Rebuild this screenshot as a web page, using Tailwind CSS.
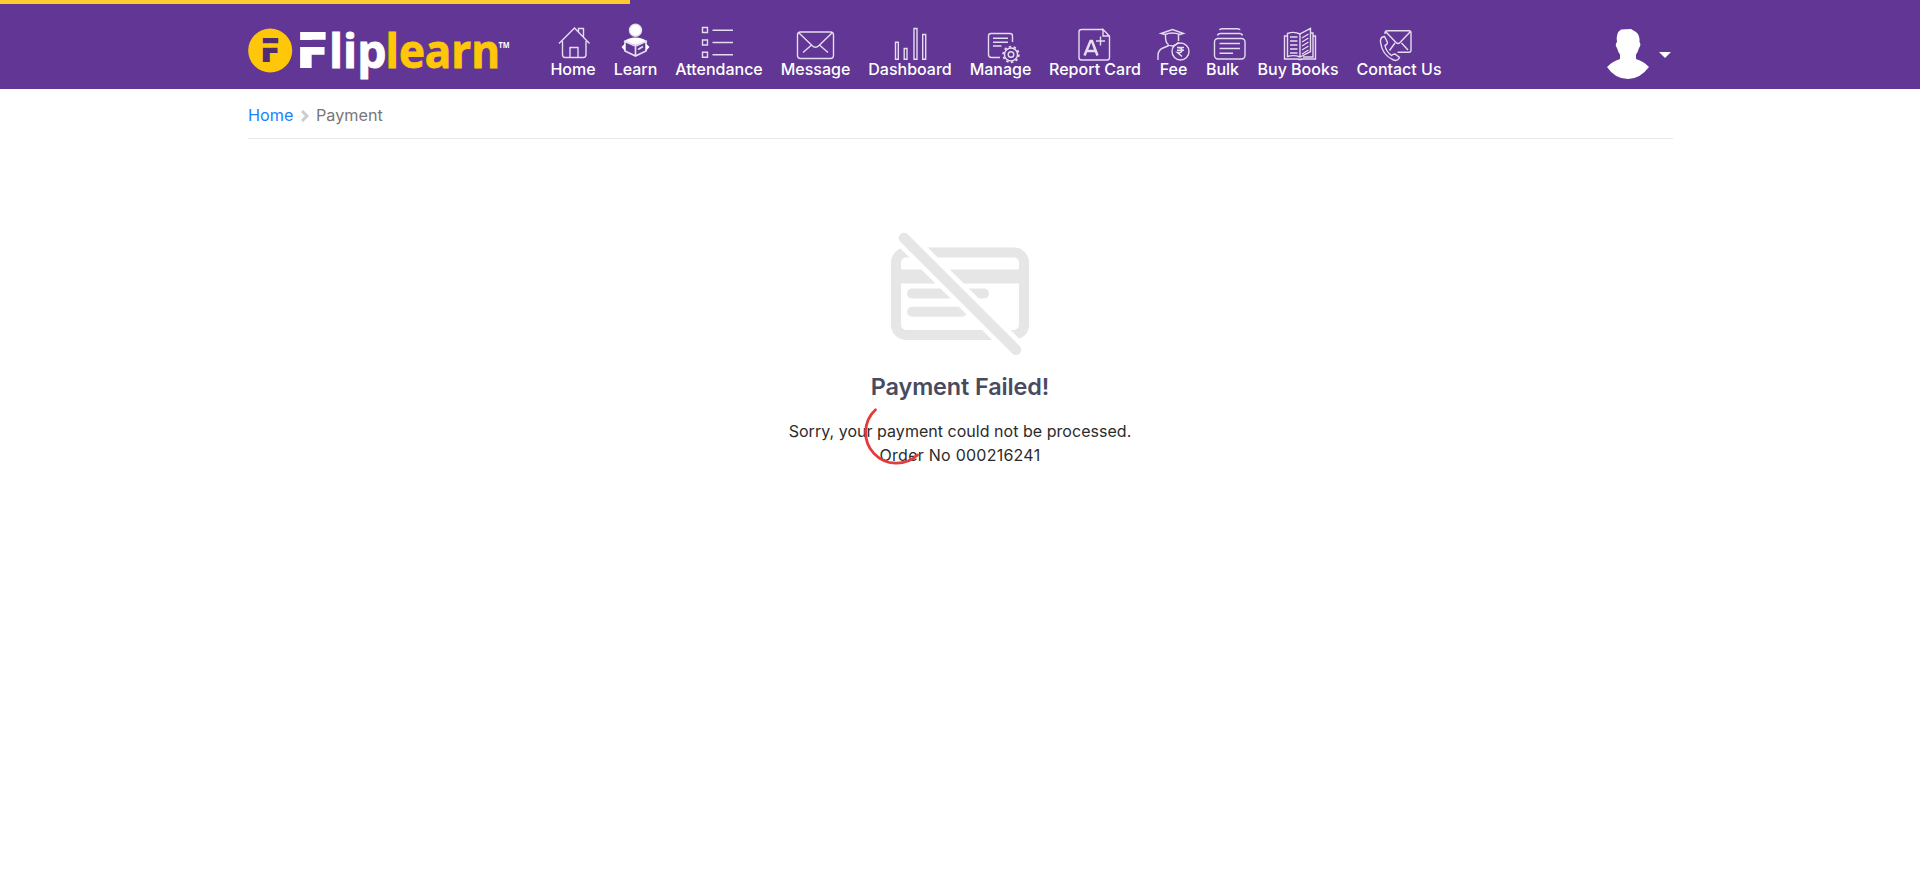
<!DOCTYPE html>
<html lang="en">
<head>
<meta charset="utf-8">
<title>Payment</title>
<script src="https://cdn.jsdelivr.net/npm/@tailwindcss/browser@4"></script>
</head>
<body class="bg-white font-['Inter',sans-serif] overflow-hidden">
<div class="absolute left-0 top-0 h-1 w-[630px] bg-[#ffca2c]"></div>
<header class="h-[89px] bg-[#613694] pl-[248px] flex text-white">
  <svg class="w-[302px] h-[89px] shrink-0" viewBox="248 0 302 89">
    <circle cx="270.2" cy="50.5" r="22" fill="#fec709"/>
    <g font-family="Open Sans" font-weight="800">
      <text x="260" y="62" font-size="33" textLength="19.5" lengthAdjust="spacingAndGlyphs" fill="#4d2d6e">F</text>
      <rect x="261" y="43.2" width="10" height="4.6" fill="#fec709"/>
      <text x="295.500" y="68.200" font-size="50" textLength="32.500" lengthAdjust="spacingAndGlyphs" fill="#fff">F</text>
      <rect x="298" y="40" width="14" height="7" fill="#613694"/>
    </g>
    <g font-family="Open Sans" font-weight="700" font-size="46.500" stroke-width="0.900">
      <text x="329" y="67.700" textLength="57.500" lengthAdjust="spacingAndGlyphs" fill="#fff" stroke="#fff">lip</text>
      <text x="385.500" y="67.700" textLength="114.500" lengthAdjust="spacingAndGlyphs" fill="#fec709" stroke="#fec709">learn</text>
    </g>
    <text x="498.500" y="48" font-family="Open Sans" font-weight="700" font-size="9" textLength="11" lengthAdjust="spacingAndGlyphs" fill="#fff">TM</text>
  </svg>
  <nav class="flex gap-[18px] pt-6 text-[16px] leading-[18px] font-medium whitespace-nowrap [&_a]:flex [&_a]:flex-col [&_a]:items-center [&_svg]:h-9 [&_svg]:w-full [&_svg]:overflow-visible [&_svg]:fill-none [&_svg]:stroke-[#e6dcf0] [&_svg]:stroke-[1.4]">
    <a class="w-[46px]"><svg viewBox="550 24 46 36"><path d="M559 43.500L574.500 28L589.500 43.500M562.500 41V54.500Q562.500 57.500 565 57.500H583.500Q586 57.500 586 54.500V41M570 57.500V47.500H578V57.500M578.500 31.500V28.500H583.500V37"/></svg><span>Home</span></a>
    <a class="w-[43px]"><svg viewBox="614 24 43 36"><circle cx="635.500" cy="30.300" r="6" fill="#fff"/><path fill="#fff" stroke="none" d="M623.500 41.500Q629 37.500 635.500 37.500Q642 37.500 647.500 41.500L635.500 45Z"/><path stroke-width="1.700" d="M625 41.500L635.500 46L646 41.500V51L635.500 56L625 51ZM635.500 46V56M638 49.500L643 46.500"/><path fill="#fff" stroke="none" d="M625 43.500L621.500 47L625 51ZM646 43.500L649.500 47L646 51Z"/></svg><span>Learn</span></a>
    <a class="w-[88px]"><svg viewBox="675 24 88 36"><path d="M702.500 27.500h5v5h-5zM702.500 40h5v5h-5zM702.500 52.300h5v5h-5zM712.500 30.300H733M712.500 42.500H733M712.500 54.800H733"/></svg><span>Attendance</span></a>
    <a class="w-[69px]"><svg viewBox="781 24 69 36"><rect x="797.500" y="32" width="36" height="26.500" rx="3"/><path d="M799 33L812 45.500Q815.500 49 819 45.500L832 33M803 52.500L811 45.500M828 52.500L820 45.500"/></svg><span>Message</span></a>
    <a class="w-[84px]"><svg viewBox="868 24 84 36"><path d="M895.500 42.200h2.800v17h-2.800zM904.200 48.500h2.800v10.700h-2.800zM914 28.500h3v30.700h-3zM922.700 34.500h3v24.700h-3z"/></svg><span>Dashboard</span></a>
    <a class="w-[61px]"><svg viewBox="970 24 61 36"><path d="M1012.500 42V36Q1012.500 33.500 1010 33.500H991Q988.500 33.500 988.500 36V54.500Q988.500 57.500 991.500 57.500H1000M993 38.200H1008M993 42.200H1008M993 46H1001.500"/><circle cx="1011" cy="54.500" r="6.500"/><circle cx="1011" cy="54.500" r="7.800" stroke-width="1.800" stroke-dasharray="2.450 2.450"/><circle cx="1011" cy="54.500" r="2.800"/></svg><span>Manage</span></a>
    <a class="w-[92px]"><svg viewBox="1049 24 92 36"><path d="M1103 29.500H1081.500Q1079 29.500 1079 32V57.500Q1079 60 1081.500 60H1107Q1109.500 60 1109.500 57.500V36L1103 29.500V36H1109.500M1100.500 36.500V45.500M1096 41H1105"/><path stroke-width="2.500" d="M1084.500 55.500L1090.500 41H1092L1097.500 55.500M1086.500 51H1096"/></svg><span>Report Card</span></a>
    <a class="w-[29px]"><svg viewBox="1159 24 29 36"><path d="M1161 33.500L1172.500 29.500L1183.500 33.500L1180 34.500Q1172 31.500 1165 34.500ZM1165.500 35V38Q1166 46 1172.500 46Q1177 45 1178.500 42M1178.500 35V41M1158 60V55.500Q1158 50 1163 48L1168 46V43.500"/><circle cx="1180.500" cy="51.500" r="8.500"/><path stroke-width="1.500" d="M1177 47.500H1184M1177 50.300H1184M1177 47.500Q1182 47.500 1182 50.300T1177.500 52.500L1182 56.500"/></svg><span>Fee</span></a>
    <a class="w-[33px]"><svg viewBox="1206 24 33 36"><path stroke-width="1.500" d="M1219.500 30Q1220 28.800 1222 28.800H1237.500Q1239.500 28.800 1240 30M1217.500 35.500Q1218 33.500 1220.500 33.500H1239.500Q1242 33.500 1242.500 35.500M1219.500 43.500H1240M1219.500 48.500H1240M1219.500 53.300H1233"/><rect x="1214.500" y="38.500" width="30.500" height="20.500" rx="3.500"/></svg><span>Bulk</span></a>
    <a class="w-[82px]"><svg viewBox="1257 24 82 36"><path d="M1300 34Q1294 31 1287.500 33.500V56.500Q1294 54.500 1300 57L1310.500 51.500V28.500L1300 34V57M1287.500 36H1284.500V59H1298Q1300 60 1302 59H1315.500V36H1313V57H1303M1310.500 33H1313V57M1290 37H1297.500M1290 41H1297.500M1290 45H1297.500M1290 49H1297.500M1290 53H1297.500M1302 38L1308.500 34M1302 42L1308.500 38M1302 46L1308.500 42M1302 50L1308.500 46M1302 54L1308.500 50"/></svg><span>Buy Books</span></a>
    <a class="w-[84px]"><svg viewBox="1357 24 84 36"><path d="M1385 34V33Q1385 30.700 1387.500 30.700H1409Q1411 30.700 1411 33V50Q1411 52.300 1409 52.300H1397.500M1386 32L1396 42.500Q1398 44.500 1400 42.500L1410.500 31.500M1389.500 50.500L1395 43M1408 50L1401.500 43M1384.500 36.500Q1380 37 1380.500 42Q1382 55 1393.500 60Q1397.500 61.500 1399.500 57.500L1395 54Q1393 54 1391.500 55.500Q1386 51.500 1385 45.500Q1387.500 44.500 1387.500 42.500Z"/></svg><span>Contact Us</span></a>
  </nav>
  <div class="ml-[165px] pt-[28px] flex">
    <svg class="w-[44px] h-[52px]" viewBox="1606 28 44 52" fill="#fff"><path d="M1621 29.500L1631 29L1636 32Q1640 35 1639.500 42Q1641.500 45 1639 48Q1638 52 1636 54.500V59Q1644 61.500 1649 67Q1640 79 1628 79Q1615 79 1607 67Q1612 61.500 1620 59V54.500Q1618 52 1617 48Q1614.500 45 1617 42Q1615.500 33 1621 29.500Z"/></svg>
    <svg class="ml-[9px] mt-6 w-3 h-[6px]" viewBox="0 0 12 6" fill="#fff"><path d="M0 0H12L6 6Z"/></svg>
  </div>
</header>
<div class="ml-[248px] w-[1425px] h-[50px] border-b border-[#e9e9ea] flex items-start pt-[15px] text-[16.2px] leading-[22px]">
  <a class="text-[#1a82fb] w-[46px]">Home</a>
  <svg class="mx-[7px] mt-[6px] w-2 h-3" viewBox="0 0 8 12" fill="none" stroke="#ccc" stroke-width="3"><path d="M1 1L6 6L1 11"/></svg>
  <span class="text-[#777]">Payment</span>
</div>
<main class="flex flex-col items-center text-[16px] leading-6 text-[#2b2b2b]">
  <svg class="mt-[91px] h-[130px] w-[160px] fill-none stroke-[#e6e6e6]" viewBox="880 230 160 130" stroke-linecap="round">
    <rect x="896" y="252.500" width="128" height="82.500" rx="10" stroke-width="10"/>
    <path stroke="none" fill="#e6e6e6" d="M896 269.500H1024V283.500H896Z"/>
    <path stroke-width="10" d="M912 293.600H984M912 311.700H962"/>
    <path stroke="#fff" stroke-width="20" stroke-linecap="butt" d="M898 232L1022 355.700"/>
    <path stroke-width="10.500" d="M904 238L1016 349.700"/>
  </svg>
  <h1 class="mt-[12px] text-[23.4px] leading-[30px] font-semibold tracking-[-0.1px] text-[#484b5f]">Payment Failed!</h1>
  <p class="mt-[17px] tracking-[0.03px]">Sorry, your payment could not be processed.</p>
  <p class="tracking-[0.25px]">Order No 000216241</p>
</main>
<svg class="absolute left-[860px] top-[400px] w-[64px] h-[66px]" viewBox="860 400 64 66" fill="none" stroke="#e53b3b" stroke-width="2.800" stroke-linecap="round"><path d="M875.500 409.700A30.500 30.500 0 0 0 917.500 455"/></svg>
</body>
</html>
